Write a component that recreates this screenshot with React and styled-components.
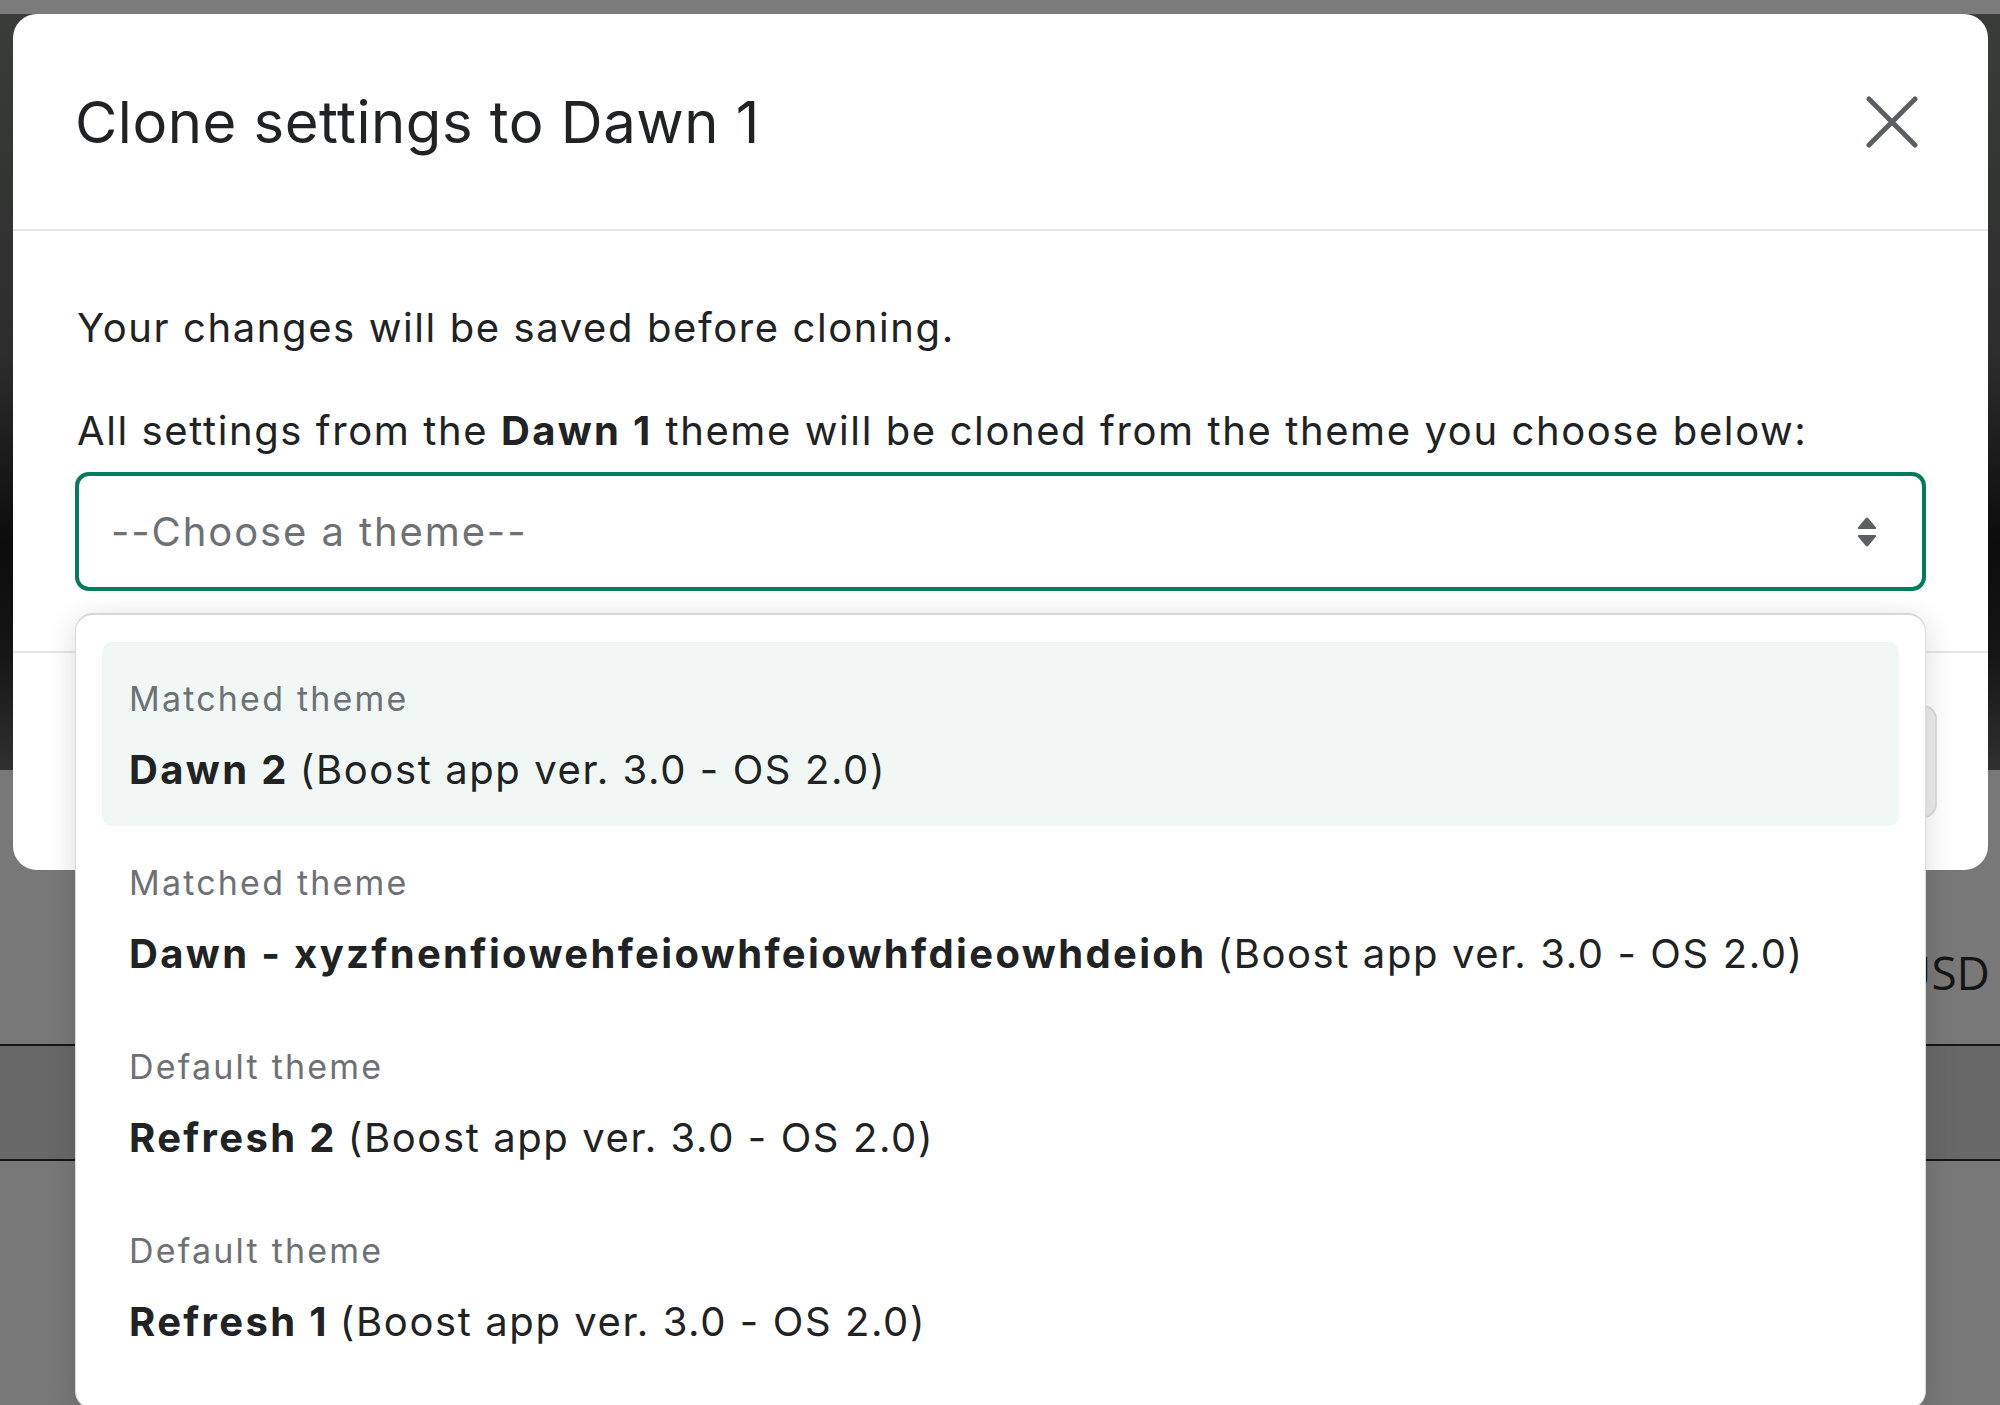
import React from 'react';
import styled, { createGlobalStyle } from 'styled-components';

const GlobalStyle = createGlobalStyle`
  html, body {
    margin: 0;
    padding: 0;
    overflow: hidden;
  }
  body {
    font-family: Inter, "Noto Sans", "Liberation Sans", sans-serif;
    color: #202223;
  }
`;

const themes = [
  { label: 'Matched theme', name: 'Dawn 2', active: true },
  { label: 'Matched theme', name: 'Dawn - xyzfnenfiowehfeiowhfeiowhfdieowhdeioh' },
  { label: 'Default theme', name: 'Refresh 2' },
  { label: 'Default theme', name: 'Refresh 1' },
];

/* page behind the overlay */
const Screen = styled.div`
  position: relative;
  width: 2000px;
  height: 1405px;
  overflow: hidden;
  background: #797979;
`;

const TopBar = styled.div`
  height: 14px;
  background: #7b7b7b;
`;

const Hero = styled.div`
  height: 756px;
  background: linear-gradient(
    180deg,
    #3a3c3a 0%,
    #2c2d2c 45%,
    #0c0c0c 70%,
    #161616 85%,
    #2f302f 100%
  );
`;

const PageRow = styled.div`
  display: flex;
  justify-content: flex-end;
  align-items: ${(p) => (p.$textTop ? 'flex-start' : 'center')};
  height: ${(p) => p.$height}px;
  box-sizing: border-box;
  padding: ${(p) => (p.$textTop ? '172px 10px 0' : '0 10px')};
  background: ${(p) => p.$bg || '#787878'};
  border-top: ${(p) => (p.$lined ? '2px solid #151515' : 'none')};
  border-bottom: ${(p) => (p.$lined ? '2px solid #151515' : 'none')};
  font-family: "Open Sans", "Noto Sans", sans-serif;
  font-size: 46px;
  line-height: 60px;
  color: #151515;
`;

/* overlay */
const Layer = styled.div`
  position: absolute;
  inset: 0;
  padding: 14px 12px 0 13px;
`;

const Modal = styled.div`
  display: flex;
  flex-direction: column;
  background: #ffffff;
  border-radius: 24px;
`;

const Header = styled.div`
  display: flex;
  align-items: center;
  justify-content: space-between;
  height: 217px;
  padding: 0 70px 0 62px;
  border-bottom: 2px solid #e4e5e7;
  box-sizing: border-box;
`;

const Title = styled.h2`
  margin: 0;
  font-size: 58px;
  line-height: 70px;
  font-weight: 400;
  letter-spacing: 0.5px;
`;

const CloseButton = styled.button`
  display: flex;
  padding: 0;
  border: 0;
  background: none;
  cursor: pointer;
`;

const Body = styled.div`
  display: flex;
  flex-direction: column;
  padding: 71px 62px 0;
  height: 422px;
  box-sizing: border-box;
  border-bottom: 2px solid #e4e5e7;
`;

const Text = styled.p`
  margin: 0 0 ${(p) => p.$gap || 0}px;
  font-size: 40px;
  line-height: 52px;
  letter-spacing: 1.6px;
  padding-left: 2px;
  b {
    font-weight: 700;
    letter-spacing: 2.3px;
  }
`;

const SelectWrap = styled.div`
  position: relative;
  margin-top: 15px;
`;

const SelectBox = styled.div`
  display: flex;
  align-items: center;
  justify-content: space-between;
  height: 119px;
  box-sizing: border-box;
  padding: 0 44px 0 32px;
  border: 4px solid #047b5d;
  border-radius: 14px;
  font-size: 40px;
  letter-spacing: 1.9px;
  color: #6d7175;
`;

const Dropdown = styled.div`
  position: absolute;
  top: 141px;
  left: 0;
  right: 0;
  z-index: 2;
  padding: 27px 26px 30px;
  background: #ffffff;
  border: 1px solid #d9dadb;
  border-top: 2px solid #d6d7d8;
  border-radius: 18px;
  box-shadow: 0 6px 30px rgba(0, 0, 0, 0.14);
`;

const Option = styled.div`
  display: flex;
  flex-direction: column;
  gap: 22px;
  height: 184px;
  box-sizing: border-box;
  padding: 34px 27px 0;
  border-radius: 10px;
  background: ${(p) => (p.$active ? '#f1f7f4' : 'transparent')};
`;

const OptionLabel = styled.span`
  font-size: 34px;
  line-height: 46px;
  letter-spacing: 2.2px;
  color: #6d7175;
`;

const OptionName = styled.span`
  font-size: 40px;
  line-height: 52px;
  letter-spacing: 1.6px;
  color: #202223;
  b {
    font-weight: 700;
    letter-spacing: 2.35px;
    margin-right: 11px;
  }
`;

const Footer = styled.div`
  display: flex;
  justify-content: flex-end;
  gap: 24px;
  height: 217px;
  box-sizing: border-box;
  padding: 52px 51px 0;
`;

const FooterButton = styled.button`
  height: 113px;
  padding: 0 48px;
  border: 2px solid #dcdddf;
  border-radius: 14px;
  background: #ededee;
  font-family: inherit;
  font-size: 38px;
  color: #8c9196;
`;

function CloseIcon() {
  return (
    <svg width="52" height="52" viewBox="0 0 52 52" fill="none">
      <path
        d="M3 3L49 49M49 3L3 49"
        stroke="#5c5f62"
        strokeWidth="5"
        strokeLinecap="round"
      />
    </svg>
  );
}

function SelectIcon() {
  return (
    <svg width="22" height="32" viewBox="0 0 22 32">
      <path
        d="M11 1.5c.6 0 1 .3 1.3.7l7.6 9c.6.8.1 1.8-.9 1.8H3c-1 0-1.5-1-.9-1.8l7.6-9c.3-.4.7-.7 1.3-.7Z"
        fill="#5c5f62"
      />
      <path
        d="M11 30.5c.6 0 1-.3 1.3-.7l7.6-9c.6-.8.1-1.8-.9-1.8H3c-1 0-1.5 1-.9 1.8l7.6 9c.3.4.7.7 1.3.7Z"
        fill="#5c5f62"
      />
    </svg>
  );
}

export default function App() {
  return (
    <>
      <GlobalStyle />
      <Screen>
        <TopBar />
        <Hero />
        <PageRow $height={274} $textTop>USD</PageRow>
        <PageRow $height={117} $bg="#686868" $lined />
        <PageRow $height={244} />

        <Layer>
          <Modal role="dialog" aria-label="Clone settings to Dawn 1">
            <Header>
              <Title>Clone settings to Dawn 1</Title>
              <CloseButton aria-label="Close">
                <CloseIcon />
              </CloseButton>
            </Header>

            <Body>
              <Text $gap={51}>Your changes will be saved before cloning.</Text>
              <Text>
                All settings from the <b>Dawn 1</b> theme will be cloned from
                the theme you choose below:
              </Text>
              <SelectWrap>
                <SelectBox>
                  <span>--Choose a theme--</span>
                  <SelectIcon />
                </SelectBox>
                <Dropdown>
                  {themes.map((t) => (
                    <Option key={t.name} $active={t.active}>
                      <OptionLabel>{t.label}</OptionLabel>
                      <OptionName>
                        <b>{t.name}</b>(Boost app ver. 3.0 - OS 2.0)
                      </OptionName>
                    </Option>
                  ))}
                </Dropdown>
              </SelectWrap>
            </Body>

            <Footer>
              <FooterButton>Cancel</FooterButton>
              <FooterButton disabled>Clone</FooterButton>
            </Footer>
          </Modal>
        </Layer>
      </Screen>
    </>
  );
}
